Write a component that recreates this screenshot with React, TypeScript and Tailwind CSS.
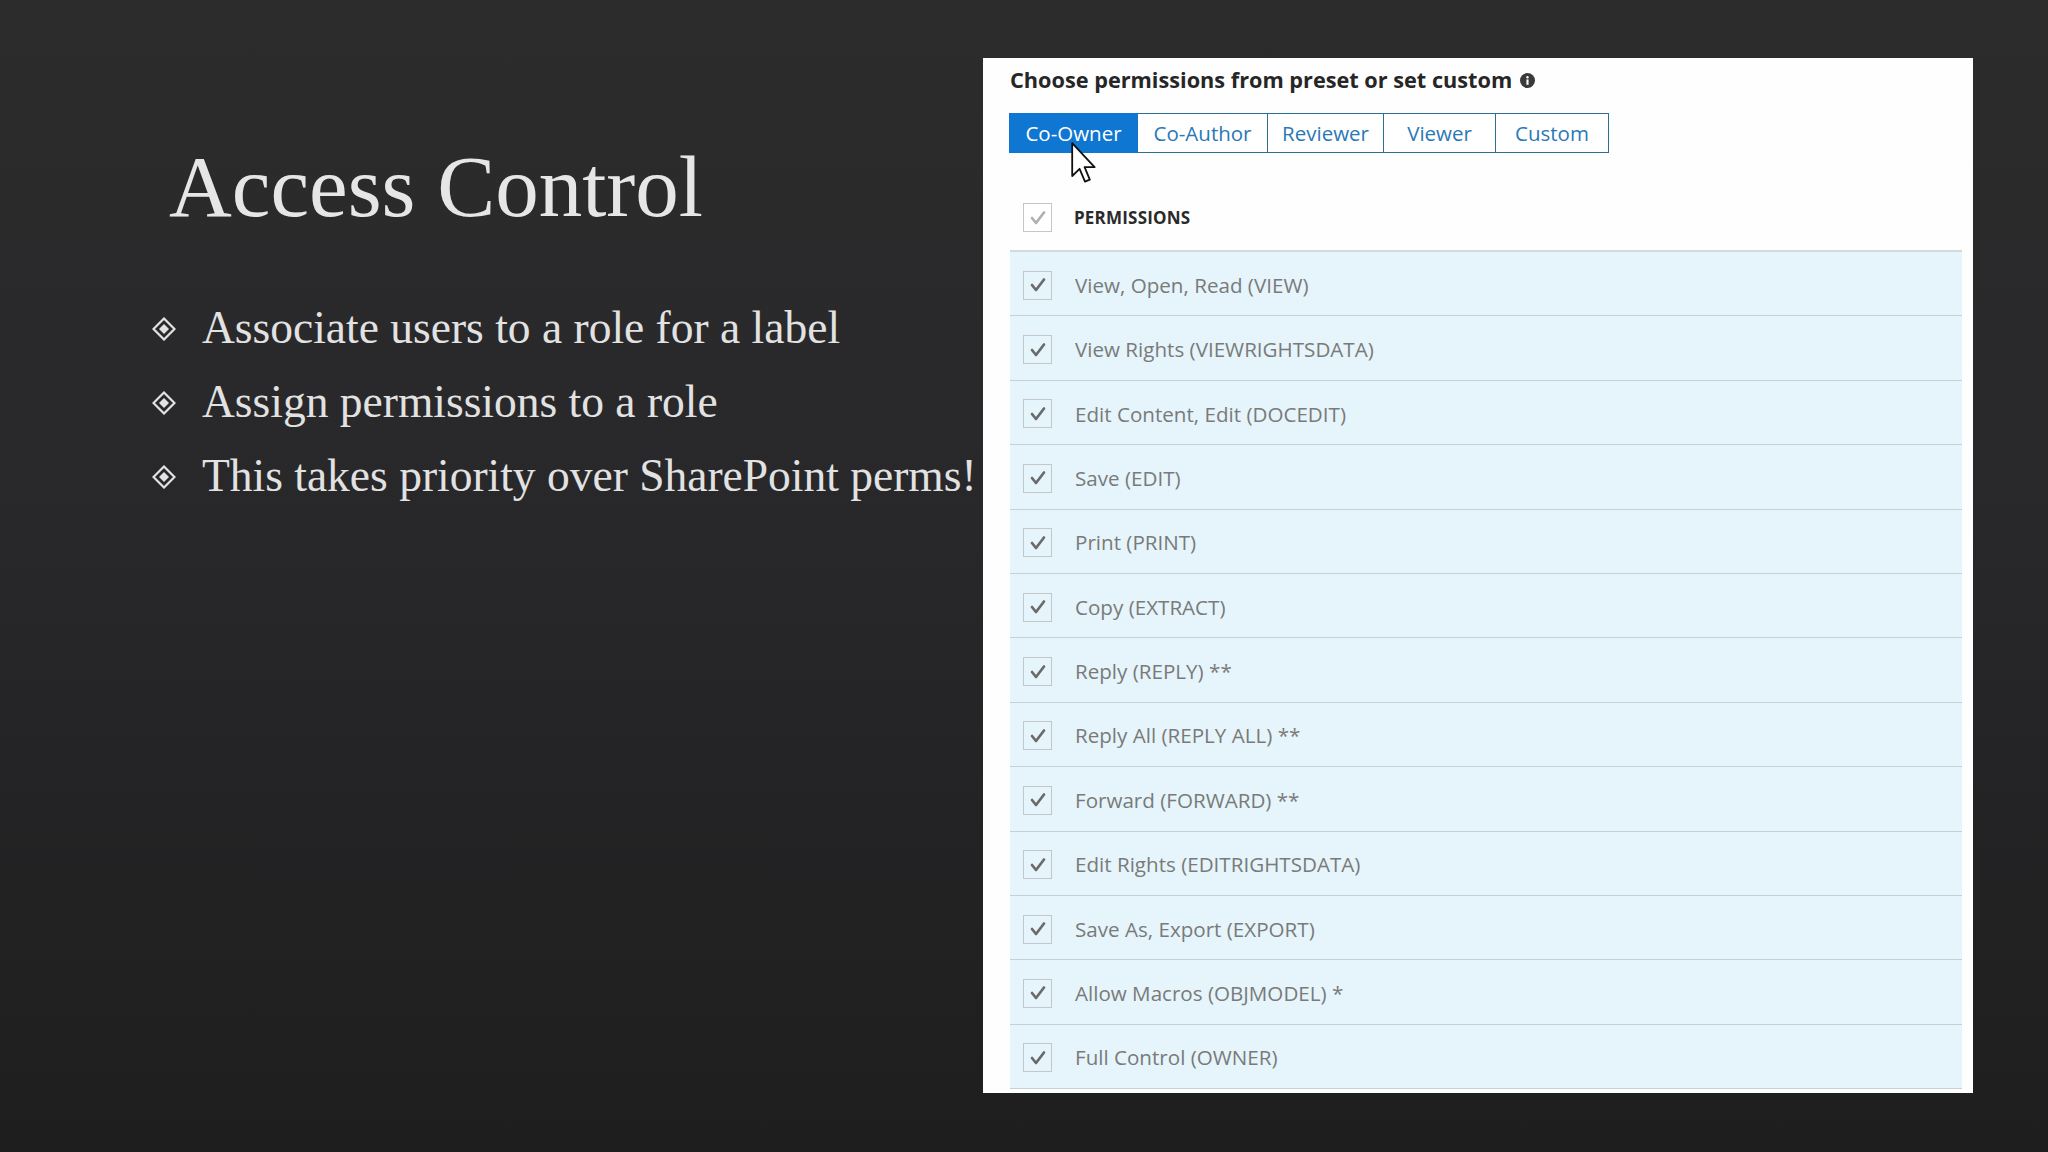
import React from "react";

const perms = [
  "View, Open, Read (VIEW)",
  "View Rights (VIEWRIGHTSDATA)",
  "Edit Content, Edit (DOCEDIT)",
  "Save (EDIT)",
  "Print (PRINT)",
  "Copy (EXTRACT)",
  "Reply (REPLY) **",
  "Reply All (REPLY ALL) **",
  "Forward (FORWARD) **",
  "Edit Rights (EDITRIGHTSDATA)",
  "Save As, Export (EXPORT)",
  "Allow Macros (OBJMODEL) *",
  "Full Control (OWNER)",
];

const bullets = [
  "Associate users to a role for a label",
  "Assign permissions to a role",
  "This takes priority over SharePoint perms!",
];

function Diamond() {
  return (
    <svg width="24" height="24" viewBox="0 0 24 24" className="shrink-0 mt-[26px]">
      <polygon points="12,1.5 22.5,12 12,22.5 1.5,12" fill="none" stroke="#e2e2e2" strokeWidth="2.2" />
      <polygon points="12,7 17,12 12,17 7,12" fill="#e2e2e2" />
    </svg>
  );
}

function Check({ light }: { light?: boolean }) {
  return (
    <div
      className={
        "w-[29px] h-[29px] shrink-0 border border-[#c3c7c9] flex items-center justify-center " +
        (light ? "bg-white" : "bg-transparent")
      }
    >
      <svg width="20" height="20" viewBox="0 0 20 20">
        <path
          d="M4 10 L8 15 L16 4.5"
          fill="none"
          stroke={light ? "#b0b0b0" : "#6a6a6a"}
          strokeWidth="2.7"
          strokeLinecap="round"
          strokeLinejoin="round"
        />
      </svg>
    </div>
  );
}

const tabs = [
  { label: "Co-Owner", w: "w-[129px]", active: true },
  { label: "Co-Author", w: "w-[130px]" },
  { label: "Reviewer", w: "w-[116px]" },
  { label: "Viewer", w: "w-[112px]" },
  { label: "Custom", w: "w-[113px]" },
];

export default function App() {
  return (
    <div className="w-[2048px] h-[1152px] overflow-hidden flex bg-[linear-gradient(180deg,#2c2c2d_0%,#28282a_45%,#1e1e1f_100%)]">
      {/* Left slide content */}
      <div className="w-[983px] shrink-0 flex flex-col">
        <h1 className="pl-[169px] pt-[144px] font-['Liberation_Serif',serif] text-[87px] leading-[86px] text-[#e6e6e6] font-normal">
          Access Control
        </h1>
        <ul className="mt-[61px] pl-[152px] flex flex-col">
          {bullets.map((b) => (
            <li key={b} className="flex items-start gap-[26px]">
              <Diamond />
              <span className="font-['Liberation_Serif',serif] text-[45.5px] leading-[74px] text-[#e2e2e2] whitespace-nowrap">
                {b}
              </span>
            </li>
          ))}
        </ul>
      </div>

      {/* Permissions panel */}
      <div className="relative mt-[58px] w-[990px] h-[1035px] shrink-0 bg-[#fefefe] overflow-hidden font-['Open_Sans',sans-serif]">
        <div className="pl-[27px] pt-[8px] flex items-center gap-[8px]">
          <span className="text-[21.7px] leading-[28px] font-bold text-[#262626]">
            Choose permissions from preset or set custom
          </span>
          <svg width="15" height="15" viewBox="0 0 14 14" className="mt-[1px]">
            <circle cx="7" cy="7" r="7" fill="#3a3a3a" />
            <rect x="6" y="6" width="2" height="5" fill="#ffffff" />
            <circle cx="7" cy="4" r="1.1" fill="#ffffff" />
          </svg>
        </div>

        <div className="ml-[26px] mt-[19px] flex h-[40px]">
          {tabs.map((t, i) => (
            <div
              key={t.label}
              className={
                t.w +
                " h-[40px] flex items-center justify-center text-[20.5px] border-y-[1.5px] border-r-[1.5px] " +
                (i === 0 ? "border-l-[1.5px] " : "") +
                (t.active
                  ? "bg-[#0f76d1] border-[#0f76d1] text-white"
                  : "bg-white border-[#2c6f93] text-[#2a78b6]")
              }
            >
              {t.label}
            </div>
          ))}
        </div>

        <div className="ml-[27px] mr-[11px] pt-[50px] pb-[18px] pl-[13px] flex items-center gap-[22px] border-b-2 border-[#d3dadd]">
          <Check light />
          <span className="text-[17px] font-bold text-[#2a2a2a] tracking-[0.2px]">PERMISSIONS</span>
        </div>

        <div className="ml-[27px] mr-[11px] flex flex-col">
          {perms.map((p) => (
            <div
              key={p}
              className="h-[64.4px] pt-[3px] flex items-center pl-[13px] gap-[23px] bg-[#e5f5fb] border-b-[1.5px] border-[#c4d2d8]"
            >
              <Check />
              <span className="text-[20.6px] text-[#7a7a7a]">{p}</span>
            </div>
          ))}
        </div>

        {/* mouse cursor */}
        <svg
          width="26"
          height="42"
          viewBox="0 0 13 21"
          className="absolute left-[88px] top-[84px]"
        >
          <path
            d="M0.6 0.6 L0.6 17 L4.3 13.4 L7 19.8 L9.4 18.8 L6.8 12.6 L11.8 12.6 Z"
            fill="#ffffff"
            stroke="#111111"
            strokeWidth="0.9"
            strokeLinejoin="round"
          />
        </svg>
      </div>
    </div>
  );
}
